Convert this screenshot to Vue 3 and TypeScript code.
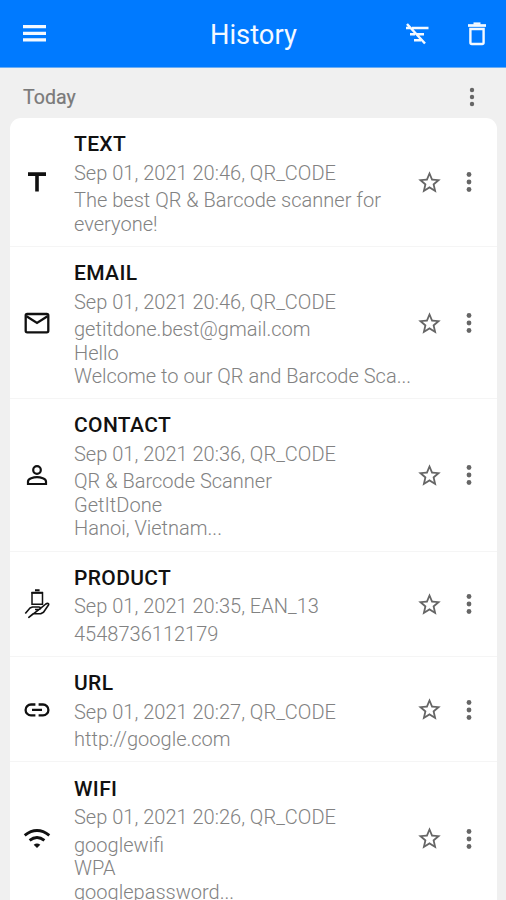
<script setup lang="ts">
type Kind = 'text' | 'email' | 'contact' | 'product' | 'url' | 'wifi'

interface Entry {
  kind: Kind
  title: string
  meta: string
  lines: string[]
}

const entries: Entry[] = [
  { kind: 'text', title: 'TEXT', meta: 'Sep 01, 2021 20:46, QR_CODE', lines: ['The best QR & Barcode scanner for', 'everyone!'] },
  { kind: 'email', title: 'EMAIL', meta: 'Sep 01, 2021 20:46, QR_CODE', lines: ['getitdone.best@gmail.com', 'Hello', 'Welcome to our QR and Barcode Sca...'] },
  { kind: 'contact', title: 'CONTACT', meta: 'Sep 01, 2021 20:36, QR_CODE', lines: ['QR & Barcode Scanner', 'GetItDone', 'Hanoi, Vietnam...'] },
  { kind: 'product', title: 'PRODUCT', meta: 'Sep 01, 2021 20:35, EAN_13', lines: ['4548736112179'] },
  { kind: 'url', title: 'URL', meta: 'Sep 01, 2021 20:27, QR_CODE', lines: ['http://google.com'] },
  { kind: 'wifi', title: 'WIFI', meta: 'Sep 01, 2021 20:26, QR_CODE', lines: ['googlewifi', 'WPA', 'googlepassword...'] },
]
</script>

<template>
  <div class="screen">
    <header class="bar">
      <svg class="menu" viewBox="0 0 23 17"><path d="M0 0h23v3.2H0zM0 6.7h23v3.2H0zM0 13.2h23v3.2H0z" fill="currentColor" /></svg>
      <h1 class="heading">History</h1>
      <svg class="filter" viewBox="0 0 24 22" fill="none" stroke="currentColor" stroke-width="2.5">
        <path d="M1 5h5M7 5h16.500M5 11.200h5M11.500 11.200h7.500M9 17.200h7M2 1l18 19.500" />
      </svg>
      <svg class="trash" viewBox="0 0 18 24" fill="none" stroke="currentColor">
        <path d="M0 3.500h18" stroke-width="2.700" /><path d="M5.500 1.600h7" stroke-width="2.400" />
        <path d="M2.400 7h13.200v13.500a1.500 1.500 0 0 1-1.500 1.500H3.900a1.500 1.500 0 0 1-1.500-1.500z" stroke-width="2.400" />
      </svg>
    </header>

    <div class="section">
      <span class="day">Today</span>
      <svg class="dots small" viewBox="0 0 6 22"><circle cx="3" cy="4" r="2.200" /><circle cx="3" cy="11" r="2.200" /><circle cx="3" cy="18" r="2.200" /></svg>
    </div>

    <main class="card">
      <article v-for="entry in entries" :key="entry.kind" class="row">
        <svg class="kind" viewBox="0 0 30 32" fill="none" stroke="currentColor" stroke-width="2.300">
          <path v-if="entry.kind === 'text'" d="M6 8.100h18M15 8v17.500" stroke-width="3.600" />
          <template v-else-if="entry.kind === 'email'">
            <rect x="3.700" y="7" width="22.600" height="18.300" rx="1.500" />
            <path d="M4.500 9.200L15 16l10.500-6.800" />
          </template>
          <template v-else-if="entry.kind === 'contact'">
            <circle cx="15" cy="11" r="3.800" stroke-width="2.200" />
            <path d="M6 25v-2.500c0-2.700 5.500-4.400 9-4.400s9 1.700 9 4.400V25z" stroke-width="2.200" />
          </template>
          <template v-else-if="entry.kind === 'product'">
            <path d="M10 4.800h10.500v11.400H10z" stroke-width="1.500" />
            <path d="M9.500 4.800h11.500M13 2.200h4.600" stroke-width="2" />
            <path d="M3.300 25.500l4.700-5.500 2.500-1h6.500c1.800 0 1.800 2.500 0 2.500h-4M18.500 20.300l5.300-4.300c1.800-1.200 3.500-.5 2.700 1l-5 7.300-2.800 1.500h-7.700l-4.200 3.500z" stroke-width="1.600" stroke-linejoin="round" />
          </template>
          <path v-else-if="entry.kind === 'url'" d="M13.400 10.500H9a5.400 5.400 0 0 0 0 10.800h4.400M16.600 10.500H21a5.400 5.400 0 0 1 0 10.800h-4.400M10 15.900h10" />
          <template v-else>
            <path d="M2.700 12.300q12.300-9.700 24.600 0M7.600 17.400q7.400-5.900 14.800 0" stroke-width="2.900" />
            <path d="M11.700 21.800q3.300-2.500 6.600 0L15 25z" fill="currentColor" stroke="none" />
          </template>
        </svg>
        <div class="body">
          <h2 class="title">{{ entry.title }}</h2>
          <p class="meta">{{ entry.meta }}</p>
          <p v-for="line in entry.lines" :key="line" class="line">{{ line }}</p>
        </div>
        <svg class="star" viewBox="0 0 24 24"><path d="M22 9.240l-7.190-.620L12 2 9.190 8.630 2 9.240l5.460 4.730L5.820 21 12 17.270 18.180 21l-1.630-7.030L22 9.240zM12 15.400l-3.760 2.270 1-4.280-3.320-2.880 4.380-.380L12 6.100l1.710 4.040 4.380.380-3.320 2.880 1 4.280L12 15.400z" /></svg>
        <svg class="dots" viewBox="0 0 6 22"><circle cx="3" cy="3.500" r="2.400" /><circle cx="3" cy="11" r="2.400" /><circle cx="3" cy="18.500" r="2.400" /></svg>
      </article>
    </main>
  </div>
</template>

<style>
body {
  margin: 0;
  overflow: hidden;
}
</style>

<style scoped>
.screen {
  box-sizing: border-box;
  height: 900px;
  overflow: hidden;
  background: #f0f0f0;
  font-family: Roboto, 'Liberation Sans', sans-serif;
}
.bar {
  display: grid;
  grid-template-columns: 23px 1fr 24px 18px;
  align-items: center;
  box-sizing: border-box;
  height: 68px;
  padding: 0 20px 0 23px;
  border-bottom: 1px solid #69adf5;
  background: #007aff;
  color: #f4f9ff;
}
.menu {
  width: 23px;
  height: 17px;
}
.heading {
  margin: 3px 0 0 164px;
  font-size: 27.300px;
  font-weight: 400;
  line-height: 34px;
}
.filter {
  width: 24px;
  height: 22px;
  margin-left: -39px;
}
.trash {
  width: 18px;
  height: 24px;
}
.section {
  display: flex;
  align-items: center;
  justify-content: space-between;
  height: 50px;
  padding: 0 31px 0 23px;
  box-sizing: border-box;
}
.day {
  margin-top: 10px;
  color: #7a7a7a;
  font-size: 19.600px;
  line-height: 24px;
  -webkit-text-stroke: 0.200px #7a7a7a;
}
.dots {
  width: 6px;
  height: 22px;
  fill: #666;
}
.dots.small {
  margin-top: 8px;
}
.row > svg {
  margin-top: -4.500px;
}
.card {
  margin: 0 9px 0 10px;
  border-radius: 11px 11px 0 0;
  background: #fff;
}
.row {
  display: flex;
  align-items: center;
  padding: 15.200px 25px 9.700px 12px;
  border-bottom: 1px solid #f5f5f5;
}
.kind {
  flex: none;
  width: 30px;
  height: 32px;
  color: #111;
}
.body {
  flex: 1;
  min-width: 0;
  margin-left: 22px;
  white-space: nowrap;
}
.title,
.meta,
.line {
  margin: 0;
  font-size: 20.050px;
  line-height: 23.500px;
}
.title {
  color: #111;
  font-size: 21px;
  font-weight: 500;
  letter-spacing: 0.350px;
}
.meta {
  margin: 5px 0 4px;
  color: #828282;
  font-weight: 300;
}
.line {
  color: #828282;
  font-weight: 300;
}
.star {
  flex: none;
  width: 27px;
  height: 27px;
  margin-right: 23.500px;
  fill: #666;
}
</style>
